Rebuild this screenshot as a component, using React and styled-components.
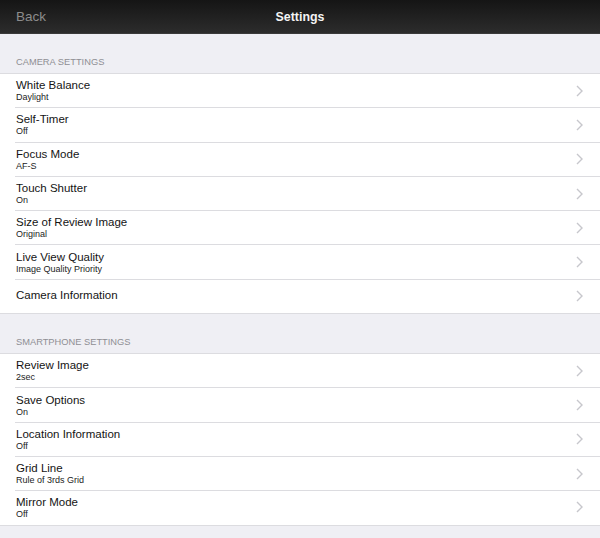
import React from 'react';
import styled, { createGlobalStyle } from 'styled-components';

const GlobalStyle = createGlobalStyle`
  html, body {
    margin: 0;
    padding: 0;
    background: #efeff4;
    font-family: "Liberation Sans", Arial, sans-serif;
  }
`;

const Page = styled.div`
  width: 600px;
  height: 538px;
  overflow: hidden;
  background: #efeff4;
`;

const NavBar = styled.div`
  height: 34px;
  box-sizing: border-box;
  display: grid;
  grid-template-columns: 1fr auto 1fr;
  align-items: center;
  padding: 0 16px;
  background: linear-gradient(#151515, #2c2c2c);
  border-bottom: 1px solid #3a3a3a;
`;

const BackButton = styled.span`
  font-size: 13.5px;
  color: #8c8c8c;
`;

const Title = styled.span`
  font-size: 12.4px;
  font-weight: bold;
  color: #f4f4f4;
`;

const SectionHeader = styled.div`
  height: 39px;
  box-sizing: border-box;
  display: flex;
  align-items: flex-end;
  padding: 0 16px 5px;
  font-size: 9.3px;
  line-height: 12px;
  color: #8e8e93;
`;

const Group = styled.div`
  background: #fff;
  border-top: 1px solid #dcdce0;
  border-bottom: 1px solid #dcdce0;
`;

const Row = styled.div`
  height: ${p => (p.last ? 33.3 : 34.3)}px;
  box-sizing: border-box;
  display: flex;
  align-items: center;
  padding: 0 17px 1px 16px;
  position: relative;
  &:not(:last-child)::after {
    content: '';
    position: absolute;
    left: 15px;
    right: 0;
    bottom: 0;
    height: 1px;
    background: #dcdce0;
  }
`;

const Labels = styled.div`
  flex: 1;
  display: flex;
  flex-direction: column;
`;

const Label = styled.span`
  font-size: 11.5px;
  line-height: 13px;
  color: #141414;
`;

const Detail = styled.span`
  font-size: 9px;
  line-height: 10px;
  color: #1c1c1c;
`;

const Chevron = () => (
  <svg width="7" height="12" viewBox="0 0 7 12">
    <polyline points="1,1 6,6 1,11" fill="none" stroke="#c7c7cc" strokeWidth="1.4" />
  </svg>
);

const camera = [
  ['White Balance', 'Daylight'],
  ['Self-Timer', 'Off'],
  ['Focus Mode', 'AF-S'],
  ['Touch Shutter', 'On'],
  ['Size of Review Image', 'Original'],
  ['Live View Quality', 'Image Quality Priority'],
  ['Camera Information'],
];

const phone = [
  ['Review Image', '2sec'],
  ['Save Options', 'On'],
  ['Location Information', 'Off'],
  ['Grid Line', 'Rule of 3rds Grid'],
  ['Mirror Mode', 'Off'],
];

const Section = ({ title, items }) => (
  <>
    <SectionHeader>{title}</SectionHeader>
    <Group>
      {items.map(([label, detail], i) => (
        <Row key={label} last={i === items.length - 1}>
          <Labels>
            <Label>{label}</Label>
            {detail && <Detail>{detail}</Detail>}
          </Labels>
          <Chevron />
        </Row>
      ))}
    </Group>
  </>
);

export default function App() {
  return (
    <Page>
      <GlobalStyle />
      <NavBar>
        <BackButton>Back</BackButton>
        <Title>Settings</Title>
        <span />
      </NavBar>
      <Section title="CAMERA SETTINGS" items={camera} />
      <Section title="SMARTPHONE SETTINGS" items={phone} />
    </Page>
  );
}
